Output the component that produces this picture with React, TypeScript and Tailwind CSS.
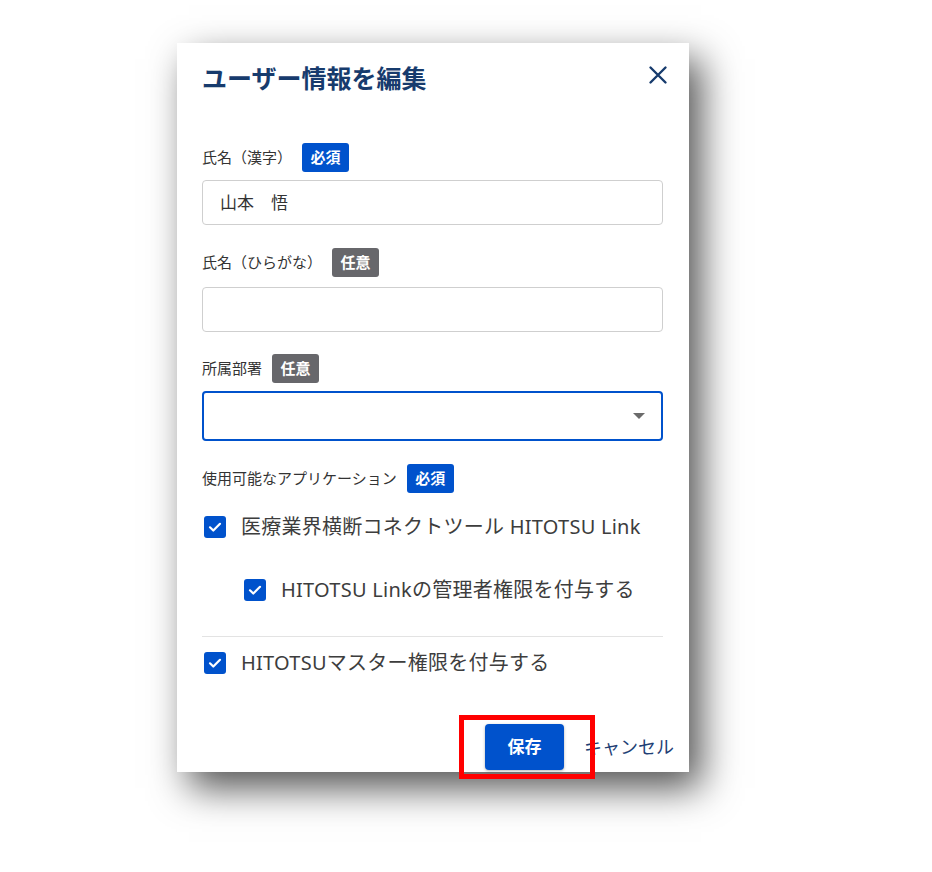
const font = { fontFamily: '"Noto Sans", "Noto Sans CJK JP", sans-serif' }

function Badge({ kind }: { kind: 'required' | 'optional' }) {
  const required = kind === 'required'
  return (
    <span
      className={`inline-flex items-center justify-center h-[29px] w-[47px] rounded-[3px] text-[15px] font-semibold text-white ${
        required ? 'bg-[#0052cc]' : 'bg-[#67676b]'
      }`}
    >
      {required ? '必須' : '任意'}
    </span>
  )
}

function Check({ label, indent }: { label: string; indent?: boolean }) {
  return (
    <label className={`flex items-center h-[30px] ${indent ? 'pl-[42px]' : 'pl-[2px]'}`}>
      <span className="w-[22px] h-[22px] rounded-[3px] bg-[#0052cc] flex items-center justify-center shrink-0">
        <svg width="16" height="16" viewBox="0 0 16 16" fill="none">
          <path d="M3 8.3l3.3 3.2L13 4.8" stroke="white" strokeWidth="2.2" strokeLinecap="round" strokeLinejoin="round" />
        </svg>
      </span>
      <span className="ml-[15px] text-[20px] text-[#3d3d3d] whitespace-nowrap tracking-[0.25px]">{label}</span>
    </label>
  )
}

export default function App() {
  return (
    <div className="w-[932px] h-[872px] bg-white relative" style={font}>
      <div className="absolute left-[177px] top-[43px] w-[512px] h-[729px] bg-white shadow-[12px_16px_36px_rgba(0,0,0,0.68)] pl-[25px] pr-[26px] pt-[17px]">
        <div className="flex items-center justify-between h-[36px]">
          <h2 className="text-[25px] font-bold text-[#173b6d] leading-none">ユーザー情報を編集</h2>
          <button className="text-[#173b6d] mr-[-5px] mt-[-6px]">
            <svg width="20" height="20" viewBox="0 0 20 20" fill="none">
              <path d="M2.5 2.5l15 15M17.5 2.5l-15 15" stroke="currentColor" strokeWidth="2.4" strokeLinecap="round" />
            </svg>
          </button>
        </div>

        <div className="mt-[47px] flex items-center h-[29px] gap-[10px]">
          <span className="text-[15px] text-[#333]">氏名（漢字）</span>
          <Badge kind="required" />
        </div>
        <div className="mt-[8px] h-[45px] border border-[#cfcfcf] rounded-[4px] flex items-center pl-[17px] text-[17px] text-[#333]">
          山本　悟
        </div>

        <div className="mt-[23px] flex items-center h-[29px] gap-[10px]">
          <span className="text-[15px] text-[#333]">氏名（ひらがな）</span>
          <Badge kind="optional" />
        </div>
        <div className="mt-[10px] h-[45px] border border-[#cfcfcf] rounded-[4px]" />

        <div className="mt-[22px] flex items-center h-[29px] gap-[10px]">
          <span className="text-[15px] text-[#333]">所属部署</span>
          <Badge kind="optional" />
        </div>
        <div className="mt-[8px] h-[50px] border-2 border-[#0052cc] rounded-[4px] flex items-center justify-end pr-[15px]">
          <svg width="14" height="8" viewBox="0 0 14 8">
            <path d="M1 1h12L7 7z" fill="#6b6b6b" />
          </svg>
        </div>

        <div className="mt-[23px] flex items-center h-[29px] gap-[10px]">
          <span className="text-[15px] text-[#333]">使用可能なアプリケーション</span>
          <Badge kind="required" />
        </div>

        <div className="mt-[19px]">
          <Check label="医療業界横断コネクトツール HITOTSU Link" />
        </div>
        <div className="mt-[33px]">
          <Check label="HITOTSU Linkの管理者権限を付与する" indent />
        </div>
        <div className="mt-[31px] h-px bg-[#e3e3e3]" />
        <div className="mt-[11px]">
          <Check label="HITOTSUマスター権限を付与する" />
        </div>

        <div className="mt-[46px] flex items-center justify-end mr-[-11px] gap-[20px]">
          <button className="w-[79px] h-[46px] rounded-[4px] bg-[#0052cc] text-white text-[17px] font-semibold shadow-[0_1px_3px_rgba(0,0,0,0.3)]">
            保存
          </button>
          <span className="text-[18px] text-[#1f3f75]">キャンセル</span>
        </div>

        <div className="absolute left-[282px] top-[672px] w-[136px] h-[64px] border-[5px] border-[#ff0000]" />
      </div>
    </div>
  )
}
